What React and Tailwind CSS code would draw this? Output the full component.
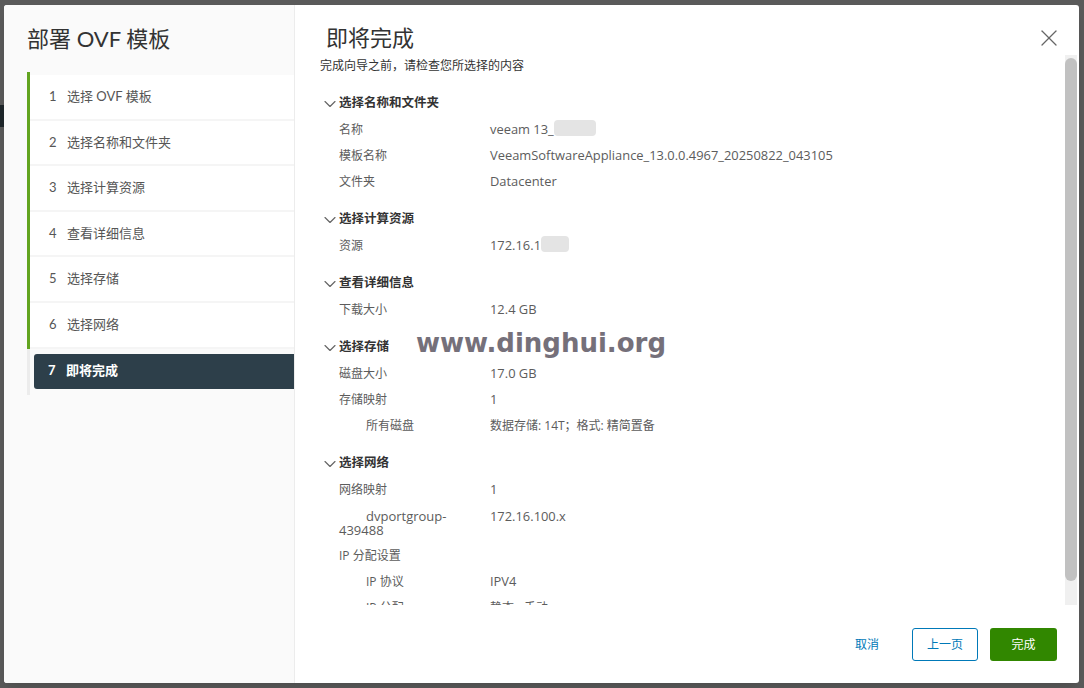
import React from "react";
import { X, ChevronDown } from "lucide-react";

const steps = [
  "选择 OVF 模板",
  "选择名称和文件夹",
  "选择计算资源",
  "查看详细信息",
  "选择存储",
  "选择网络",
];

const sections = [
  {
    title: "选择名称和文件夹",
    rows: [
      { label: "名称", value: "veeam 13_", blur: "w-[42px]", latin: true },
      { label: "模板名称", value: "VeeamSoftwareAppliance_13.0.0.4967_20250822_043105", latin: true },
      { label: "文件夹", value: "Datacenter", latin: true },
    ],
  },
  {
    title: "选择计算资源",
    rows: [{ label: "资源", value: "172.16.1", blur: "w-[28px]", latin: true }],
  },
  {
    title: "查看详细信息",
    rows: [{ label: "下载大小", value: "12.4 GB", latin: true }],
  },
  {
    title: "选择存储",
    rows: [
      { label: "磁盘大小", value: "17.0 GB", latin: true },
      { label: "存储映射", value: "1", latin: true },
      { label: "所有磁盘", value: "数据存储: 14T；格式: 精简置备", indent: true },
    ],
  },
  {
    title: "选择网络",
    rows: [
      { label: "网络映射", value: "1", latin: true },
      { label: "dvportgroup-", label2: "439488", value: "172.16.100.x", indent: true, latin: true },
      { label: "IP 分配设置", value: "" },
      { label: "IP 协议", value: "IPV4", indent: true, latin: true },
      { label: "IP 分配", value: "静态 - 手动", indent: true },
    ],
  },
];

const font = "font-['Lato','Noto_Sans_CJK_SC',sans-serif]";
const rowFont = "font-['Open_Sans','Noto_Sans_CJK_SC',sans-serif]";

const Row = ({ row }) => (
  <div className={`flex text-[12px] text-[#5c5c5c] ${rowFont} ${row.label2 ? "h-[40px] pt-[6px] leading-[14px]" : "h-[26px] items-center"}`}>
    <div className={`w-[151px] shrink-0 ${row.indent ? "indent-[27px]" : ""} ${row.label2 ? "text-[13px]" : ""}`}>
      {row.label}
      {row.label2 && (
        <>
          <br />
          {row.label2}
        </>
      )}
    </div>
    <div className={`flex items-start ${row.latin ? "text-[12.9px]" : ""}`}>
      {row.value}
      {row.blur && <span className={`inline-block h-[16px] ${row.blur} bg-[#e4e4e4] rounded-sm`} />}
    </div>
  </div>
);

export default function App() {
  return (
    <div className={`relative w-[1084px] h-[688px] bg-[#5a5a5a] pt-[5px] pl-[4px] overflow-hidden ${font}`}>
      {/* page behind the backdrop */}
      <div className="absolute left-0 top-[105px] w-[4px] h-[22px] bg-[#1d2529]" />

      <div className="flex w-[1075px] h-[678px] bg-white rounded-[3px] shadow-lg overflow-hidden">
        {/* left: steps */}
        <div className="w-[291px] shrink-0 bg-[#fafafa] border-r border-[#ececec]">
          <h1 className="pl-[23px] pt-[19px] h-[54px] text-[22px] leading-[30px] text-[#333]">部署 OVF 模板</h1>
          <div className="ml-[23px] mt-[16px]">
            <div className="border-l-[3px] border-[#62a420] -mt-[3px] pt-[3px]">
              {steps.map((s, i) => (
                <div
                  key={i}
                  className="h-[45.6px] flex items-center pl-[19px] bg-white border-b-2 border-[#f5f5f5] text-[13px] text-[#565656]"
                >
                  <span className="w-[18px]">{i + 1}</span>
                  <span>{s}</span>
                </div>
              ))}
            </div>
            <div className="border-l-[3px] border-[#ececec] pt-[5px] pb-[6px]">
              <div className="ml-[4px] h-[35px] flex items-center pl-[14px] bg-[#2d3f4a] rounded-l-[3px] text-[13px] font-bold text-white">
                <span className="w-[18px]">7</span>
                <span>即将完成</span>
              </div>
            </div>
          </div>
        </div>

        {/* right: summary */}
        <div className="flex-1 flex flex-col relative">
          <div className="h-[50px] flex items-center justify-between pl-[31px] pr-[16px] pt-[15px]">
            <h2 className="text-[22px] leading-[30px] text-[#333]">即将完成</h2>
            <X size={28} strokeWidth={1.1} className="text-[#666] mt-[1px]" />
          </div>

          <div className="flex h-[550px]">
            <div className="flex-1 overflow-hidden pl-[25px]">
              <p className="pt-[2px] h-[20px] text-[12px] leading-[18px] text-[#333]">完成向导之前，请检查您所选择的内容</p>
              <div className="pt-[15px]">
                {sections.map((sec, i) => (
                  <div key={i} className="mb-[11px]">
                    <div className="h-[27px] flex items-center text-[12.5px] font-bold text-[#333]">
                      <ChevronDown size={20} strokeWidth={1.4} className="text-[#666]" />
                      <span className="-ml-[1px]">{sec.title}</span>
                    </div>
                    <div className="pl-[19px]">
                      {sec.rows.map((r, j) => (
                        <Row key={j} row={r} />
                      ))}
                    </div>
                  </div>
                ))}
              </div>
            </div>
            <div className="w-[12px] mr-[2px] bg-[#f0f0f0] pt-[3px] shrink-0">
              <div className="h-[523px] bg-[#c1c1c1] rounded-full" />
            </div>
          </div>

          <div className="flex-1 flex justify-end items-start gap-[12px] pt-[23px] pr-[22px]">
            <button className="w-[66px] h-[33px] text-[12px] text-[#0079b8]">取消</button>
            <button className="w-[66px] h-[33px] text-[12px] text-[#0079b8] border border-[#0079b8] rounded-[3px]">上一页</button>
            <button className="w-[67px] h-[33px] text-[12px] text-white bg-[#318700] rounded-[3px]">完成</button>
          </div>

          {/* watermark */}
          <div className="absolute left-[121px] top-[319px] text-[26px] font-bold text-[#75707a] font-['DejaVu_Sans',sans-serif]">
            www.dinghui.org
          </div>
        </div>
      </div>
    </div>
  );
}
